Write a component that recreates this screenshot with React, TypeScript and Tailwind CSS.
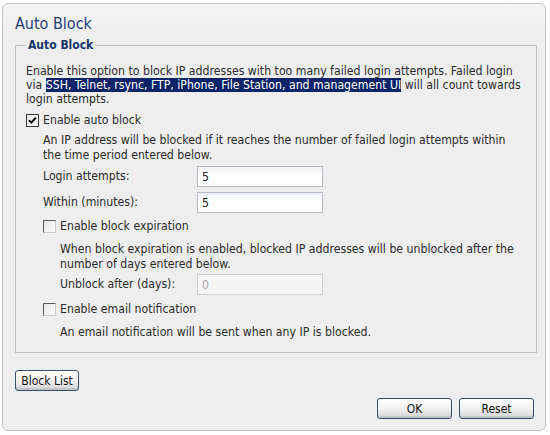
import React from 'react';

const Checkbox = ({ checked, label }: { checked?: boolean; label: string }) => (
  <label className="flex items-center gap-[4px] h-[16px]">
    <span
      className={`w-[13px] h-[13px] flex items-center justify-center bg-gradient-to-br from-[#e4e4e4] to-white border ${
        checked ? 'border-[#3a3a3a]' : 'border-t-[#5a5a5a] border-l-[#5a5a5a] border-b-[#c8c8c8] border-r-[#c8c8c8]'
      }`}
    >
      {checked && (
        <svg width="9" height="9" viewBox="0 0 9 9">
          <path d="M1 4.2 L3.4 6.6 L8 1.6" stroke="#000" strokeWidth="2" fill="none" />
        </svg>
      )}
    </span>
    <span>{label}</span>
  </label>
);

const Field = ({
  label,
  value,
  disabled,
  labelClass = 'w-[154px]',
}: {
  label: string;
  value: string;
  disabled?: boolean;
  labelClass?: string;
}) => (
  <div className="flex items-center">
    <span className={labelClass}>{label}</span>
    <input
      readOnly
      value={value}
      disabled={disabled}
      className={`w-[126px] h-[21px] px-[4px] border outline-none ${
        disabled
          ? 'border-[#cfcfcf] bg-[#f5f5f5] text-[#a8a8a8]'
          : 'border-[#b9bcc6] bg-gradient-to-b from-[#eef0f3] to-white to-[40%] text-[#222]'
      }`}
    />
  </div>
);

const Button = ({ children, className = '' }: { children: React.ReactNode; className?: string }) => (
  <button
    className={`h-[21px] rounded-[3px] border border-[#3b5068] bg-gradient-to-b from-white via-[#f2f2f2] to-[#d3d3d3] text-[#111] text-[12px] leading-none shadow-[inset_0_-2px_0_#c4c4c4] ${className}`}
  >
    {children}
  </button>
);

export default function App() {
  return (
    <div className="w-[550px] h-[435px] bg-white pt-[3px] px-[2px] font-['DejaVu_Sans_Condensed','Liberation_Sans',Arial,sans-serif] text-[12.2px] text-[#2b2b2b]">
      <div className="h-[428px] w-[544px] rounded-[6px] border border-[#c4c4c4] bg-gradient-to-b from-[#f4f4f4] to-[#eeeeee] to-[10%] pl-[12px] pr-[8px] flex flex-col">
        <h1 className="mt-[9px] text-[16px] leading-[22px] text-[#1d3f73]">Auto Block</h1>
        <fieldset className="mt-[3px] border border-[#c0c0c0] pl-[10px] pr-[10px] pb-[12px]">
          <legend className="px-[2px] font-bold text-[12px] text-[#15356a] leading-[14px]">Auto Block</legend>
          <p className="mt-[12px] leading-[14px]">
            Enable this option to block IP addresses with too many failed login attempts. Failed login
            <br />
            via <span className="bg-[#0a246a] text-white">SSH, Telnet, rsync, FTP, iPhone, File Station, and management UI</span>{' '}
            will all count towards
            <br />
            login attempts.
          </p>
          <div className="mt-[6px]">
            <Checkbox checked label="Enable auto block" />
          </div>
          <div className="pl-[17px] mt-[5px] flex flex-col">
            <p className="leading-[15px]">
              An IP address will be blocked if it reaches the number of failed login attempts within
              <br />
              the time period entered below.
            </p>
            <div className="mt-[3px] flex flex-col gap-[5px]">
              <Field label="Login attempts:" value="5" />
              <Field label="Within (minutes):" value="5" />
            </div>
            <div className="mt-[5px]">
              <Checkbox label="Enable block expiration" />
            </div>
            <div className="pl-[17px] mt-[8px] flex flex-col">
              <p className="leading-[15px]">
                When block expiration is enabled, blocked IP addresses will be unblocked after the
                <br />
                number of days entered below.
              </p>
              <div className="mt-[2px]">
                <Field label="Unblock after (days):" value="0" disabled labelClass="w-[137px]" />
              </div>
            </div>
            <div className="mt-[6px]">
              <Checkbox label="Enable email notification" />
            </div>
            <p className="pl-[17px] mt-[8px] leading-[15px]">An email notification will be sent when any IP is blocked.</p>
          </div>
        </fieldset>
        <div className="mt-[17px]">
          <Button className="w-[64px]">Block List</Button>
        </div>
        <div className="mt-[7px] flex justify-end gap-[7px] pr-[3px]">
          <Button className="w-[75px]">OK</Button>
          <Button className="w-[75px]">Reset</Button>
        </div>
      </div>
    </div>
  );
}
